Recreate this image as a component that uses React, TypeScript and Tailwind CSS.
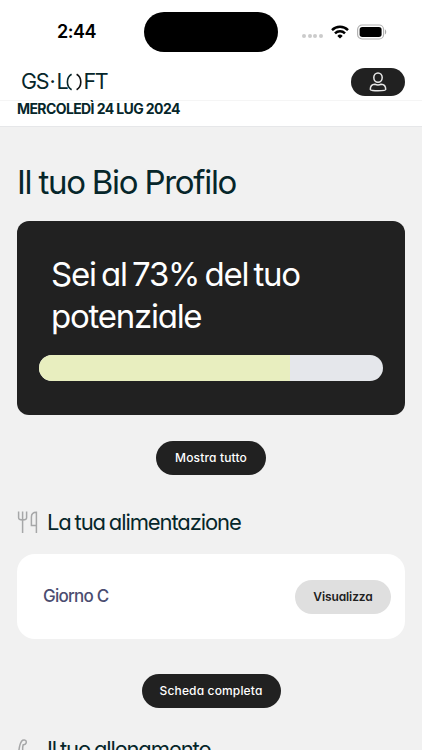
import {ReactNode} from "react";

const potential = 73;

function StatusBar() {
    return (
        <div className="flex h-16 items-center">
            <span className="w-[144px] pl-[57px] text-[18px] font-semibold leading-none tracking-[-0.5px] text-black">2:44</span>
            <div className="h-[40px] w-[134px] rounded-full bg-black"/>
            <div className="ml-[24px] mt-2 flex gap-[1.7px]">
                <span className="size-[4px] rounded-full bg-[#cbcbcb]"/>
                <span className="size-[4px] rounded-full bg-[#cbcbcb]"/>
                <span className="size-[4px] rounded-full bg-[#cbcbcb]"/>
                <span className="size-[4px] rounded-full bg-[#cbcbcb]"/>
            </div>
            <svg className="ml-[8px]" width="18" height="14" viewBox="0 0 18 14" fill="none" stroke="#000" strokeWidth="2.5">
                <path d="M1 5.1a11.4 11.4 0 0 1 16 0"/>
                <path d="M4 8.4a7.1 7.1 0 0 1 10 0"/>
                <path d="M9 13.6 6.3 10.9a3.9 3.9 0 0 1 5.4 0Z" fill="#000" stroke="none"/>
            </svg>
            <svg className="ml-[7px]" width="31" height="16" viewBox="0 0 31 16">
                <rect x="1.6" y="1" width="26" height="14" rx="4.5" fill="#fff" stroke="#b2b2b2" strokeWidth="1.2"/>
                <rect x="3.6" y="3" width="22" height="10" rx="2.7" fill="#000"/>
                <path d="M29 5.6c1.6.6 1.6 4.2 0 4.8Z" fill="#a8a8a8"/>
            </svg>
        </div>
    )
}

function Logo() {
    return (
        <div className="flex items-center text-[21.5px] font-normal leading-none text-[#06262a]">
            <span className="tracking-[-1.2px]">GS</span>
            <span className="mx-[1px] w-[6px] text-center">·</span>
            <span className="w-[9px]">L</span>
            <svg width="18" height="18" viewBox="0 0 18 18" fill="none" stroke="currentColor" strokeWidth="1.6">
                <path d="M6.6 1.3C1 4.6 1 13.4 6.6 16.7"/>
                <path d="M11.6 1.3c5.6 3.3 5.6 12.1 0 15.4" stroke="#111"/>
            </svg>
            <span className="tracking-[-1.4px]">FT</span>
        </div>
    )
}

function Header() {
    return (
        <header className="h-[127px] border-b border-[#e6e7e9] bg-white">
            <StatusBar/>
            <div className="flex h-[37px] items-center justify-between border-b border-[#f5f5f5] pl-[21px] pr-[17px]">
                <Logo/>
                <button className="flex h-[28px] w-[54px] items-center justify-center rounded-full bg-[#212121]">
                    <svg width="18" height="20" viewBox="0 0 18 20" fill="none" stroke="#e8e8e8" strokeWidth="1.5">
                        <ellipse cx="9" cy="5.6" rx="4.2" ry="4.7"/>
                        <path d="M1.3 17.6c0-3.4 2-5.3 4.5-5.3 2 .8 4.4.8 6.4 0 2.5 0 4.5 1.9 4.5 5.3 0 1.6-15.4 1.6-15.4 0Z"/>
                    </svg>
                </button>
            </div>
            <p className="pl-[17px] text-[14px] font-bold leading-[16px] tracking-[-0.6px] text-[#06262a]">MERCOLEDÌ 24 LUG 2024</p>
        </header>
    )
}

function PillButton({children, className}: { children: ReactNode, className: string }) {
    return (
        <button className={`mx-auto flex h-[34px] items-center justify-center whitespace-nowrap rounded-full bg-[#212121] text-[12px] font-medium tracking-[0.15px] text-white ${className}`}>
            {children}
        </button>
    )
}

function SectionTitle({icon, children}: { icon: ReactNode, children: ReactNode }) {
    return (
        <div className="flex h-[28px] items-center">
            <span className="w-[30px]">{icon}</span>
            <h2 className="whitespace-nowrap text-[22px] font-normal leading-none tracking-[-1.1px] [word-spacing:-1.2px] text-[#06262a]">{children}</h2>
        </div>
    )
}

function CutleryIcon() {
    return (
        <svg width="21" height="24" viewBox="0 0 21 24" fill="none" stroke="#a6a7a8" strokeWidth="1.5">
            <path d="M1.6 1.5v6.3c0 1.5 1 2.2 4 2.2s4-.7 4-2.2V1.5M5.6 1.5V23"/>
            <path d="M19.4 23V2.2c-3.2 0-5 1.6-5 4.8v8.6h5"/>
        </svg>
    )
}

function TrainingIcon() {
    return (
        <svg width="21" height="24" viewBox="0 0 21 24" fill="none" stroke="#a6a7a8" strokeWidth="1.5">
            <path d="M1.5 22C1.5 14 2.6 7 4.6 4.2 5.8 2.6 9.2 2.6 9.3 4.9c.1 2.1-1.6 2.9-3.1 2.8C5.5 10 5.4 12 6 15.2c3-1.6 12-2 13.6 2.4 1 4-5 6-18.1 4.4Z"/>
        </svg>
    )
}

export default function App() {
    return (
        <div className="h-[750px] w-[422px] overflow-hidden bg-[#f1f1f1] font-['Inter','Liberation_Sans',sans-serif] [font-feature-settings:'cv11']">
            <Header/>
            <main className="px-[17px] pt-[34px]">
                <h1 className="whitespace-nowrap text-[33px] font-normal leading-[42px] tracking-[-1.3px] [word-spacing:-0.8px] text-[#06262a]">Il tuo Bio Profilo</h1>
                <section className="mt-[18px] h-[194px] rounded-[12px] bg-[#212121] px-[22px] pt-[33px]">
                    <p className="pl-3 text-[33px] leading-[41.6px] tracking-[-1.25px] [word-spacing:-2.7px] text-white">
                        Sei al {potential}% del tuo<br/>potenziale
                    </p>
                    <div className="mt-[18px] h-[26px] overflow-hidden rounded-full bg-[#e5e7eb]">
                        <div className="h-full bg-[#e8eebf]" style={{width: `${potential}%`}}/>
                    </div>
                </section>
                <div className="mt-[26px]">
                    <PillButton className="w-[110px]">Mostra tutto</PillButton>
                </div>
                <div className="mt-[33px]">
                    <SectionTitle icon={<CutleryIcon/>}>La tua alimentazione</SectionTitle>
                </div>
                <section className="mt-[18px] flex h-[85px] items-center justify-between rounded-[18px] bg-white pl-[26px] pr-[14px]">
                    <span className="text-[17px] font-medium tracking-[-0.75px] text-[#4b4d70]">Giorno C</span>
                    <button className="flex h-[34px] w-[96px] items-center justify-center rounded-full bg-[#dfdfdf] text-[12px] font-semibold tracking-[-0.1px] text-[#212121]">
                        Visualizza
                    </button>
                </section>
                <div className="mt-[35px]">
                    <PillButton className="w-[139px]">Scheda completa</PillButton>
                </div>
                <div className="mt-[27px]">
                    <SectionTitle icon={<TrainingIcon/>}>Il tuo allenamento</SectionTitle>
                </div>
            </main>
        </div>
    )
}
